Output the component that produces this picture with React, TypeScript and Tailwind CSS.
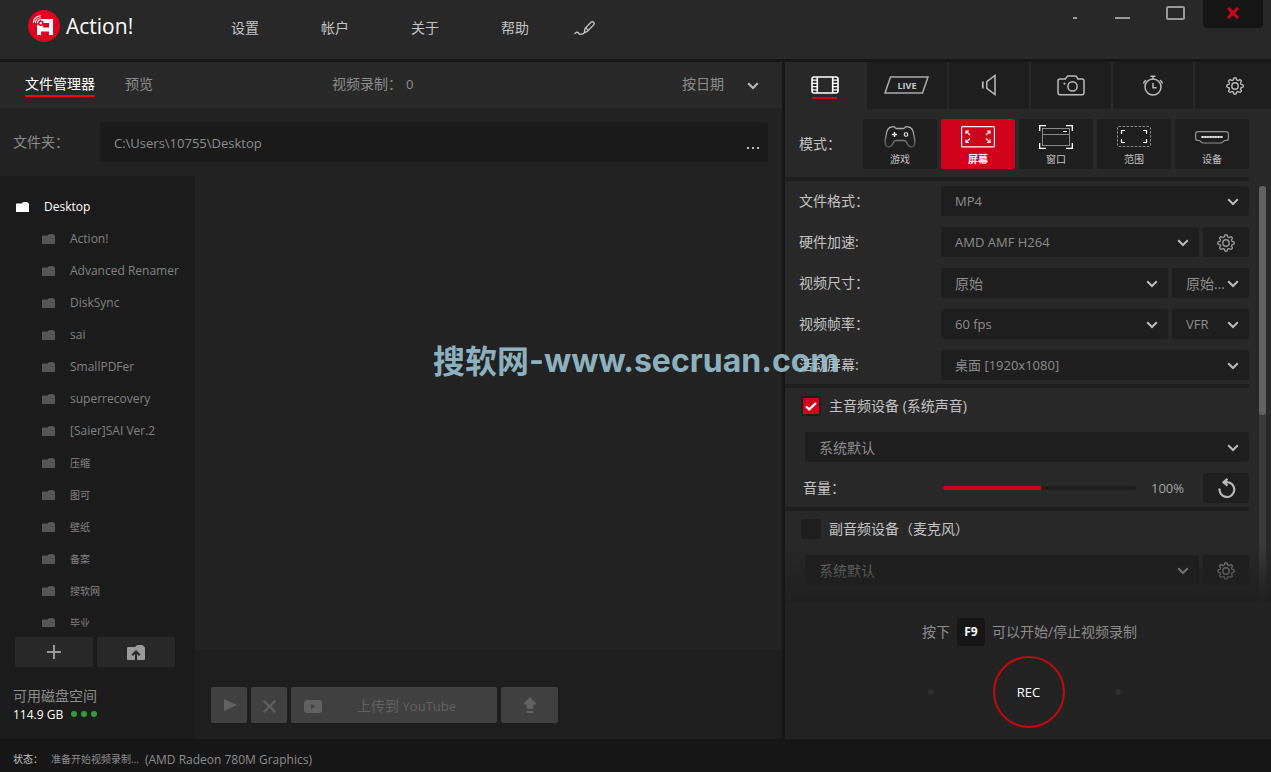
import React from 'react';
import clsx from 'clsx';

const folders = [
  'Action!',
  'Advanced Renamer',
  'DiskSync',
  'sai',
  'SmallPDFer',
  'superrecovery',
  '[Saier]SAI Ver.2',
  '压缩',
  '图可',
  '壁纸',
  '备案',
  '搜软网',
  '毕业',
];

const isLatin = (text: string) => /^[\x20-\x7e]+$/.test(text);

// Outline of an eight-tooth gear centred on 10,10
const gearPath = (() => {
  const points: string[] = [];
  for (let i = 0; i < 128; i++) {
    const angle = (i / 128) * Math.PI * 2;
    const r = 7.2 + Math.tanh(2.2 * Math.cos(angle * 8));
    points.push(`${(10 + r * Math.sin(angle)).toFixed(2)} ${(10 - r * Math.cos(angle)).toFixed(2)}`);
  }
  return `M${points.join('L')}Z`;
})();

const GearIcon: React.FC = () => (
  <svg width="20" height="20" viewBox="0 0 20 20" fill="none" stroke="currentColor" strokeWidth="1.4">
    <path d={gearPath} />
    <circle cx="10" cy="10" r="3.2" />
  </svg>
);

const FolderIcon: React.FC = () => (
  <svg width="13" height="10" viewBox="0 0 13 10" fill="currentColor" className="shrink-0">
    <path d="M0 2.2Q0 1.5.7 1.5H5.6L7 .3Q7.4 0 8 0H11L13 1.8V9.4Q13 10 12.4 10H.6Q0 10 0 9.4Z" />
  </svg>
);

const ChevronIcon: React.FC<{ className?: string }> = ({ className }) => (
  <svg width="12" height="8" viewBox="0 0 12 8" fill="none" stroke="currentColor" strokeWidth="2" className={className}>
    <path d="M1.2 1.3L6 6L10.8 1.3" />
  </svg>
);

const Logo: React.FC = () => (
  <svg width="32" height="32" viewBox="0 0 32 32" fill="none">
    <circle cx="16" cy="16" r="16" fill="#dc0420" />
    <path d="M13 9H25V25H21V21.5H13V25H9V15H13Z" fill="#fff" />
    <rect x="15" y="13" width="6" height="4.5" fill="#dc0420" />
    <circle cx="12.8" cy="13.2" r="2.8" fill="#dc0420" />
    <circle cx="12.8" cy="13.2" r="1.2" fill="#fff" />
    <path d="M9.3 13.2A3.6 3.6 0 0 1 12.8 9.8M7.4 13A5.5 5.5 0 0 1 12.8 7.8M5.4 12.8A7.4 7.4 0 0 1 12.8 5.7" stroke="#fff" strokeWidth="1.1" />
  </svg>
);

const Header: React.FC = () => (
  <header className="flex h-[62px] shrink-0 items-start border-b-3 border-[#161616] bg-[#282828]">
    <div className="flex items-center gap-1.5 pt-2.5 pl-7">
      <Logo />
      <span className="w-[69px] text-[21px] leading-8 text-white">Action!</span>
    </div>
    <nav className="flex items-start gap-[62px] pt-[18px] pl-24 text-sm leading-5 text-[#c4c4c4]">
      <a href="#settings">设置</a>
      <a href="#account">帐户</a>
      <a href="#about">关于</a>
      <a href="#help">帮助</a>
      <button aria-label="画笔" className="-ml-[17px] pt-[3px]">
        <svg width="21" height="15" viewBox="0 0 21 15" fill="none" stroke="currentColor" strokeWidth="1.3" strokeLinecap="round" strokeLinejoin="round">
          <path d="M.8 12.6Q3 10.2 4.3 12T7 13.2Q9.4 13.2 10.4 11.6" />
          <path d="M10.4 11.6L10.8 7.8L17 1.3Q18.4.2 19.6 1.3T19.7 3.9L13.4 10.3Z" />
          <path d="M11.6 6.9L14.1 9.4" />
        </svg>
      </button>
    </nav>
    <div className="ml-auto flex h-7 pr-2 text-[#999]">
      <button aria-label="迷你模式" className="flex w-5 justify-center pt-[17px]">
        <span className="h-0.5 w-1 bg-current" />
      </button>
      <button aria-label="最小化" className="ml-[23px] flex w-7 justify-center pt-[17px]">
        <span className="h-0.5 w-[15px] bg-current" />
      </button>
      <button aria-label="最大化" className="ml-[23px] flex w-8 justify-center pt-1.5">
        <span className="h-3.5 w-[19px] rounded-xs border-2 border-current" />
      </button>
      <button aria-label="关闭" className="ml-3 flex w-[60px] items-center justify-center rounded-b bg-[#151515] pb-0.5 text-[#d0021b]">
        <svg width="12" height="12" viewBox="0 0 12 12" stroke="currentColor" strokeWidth="3">
          <path d="M1 1L11 11M11 1L1 11" />
        </svg>
      </button>
    </div>
  </header>
);

const Sidebar: React.FC = () => (
  <aside className="flex w-[195px] shrink-0 flex-col bg-[#1b1b1b]">
    <ul className="min-h-0 flex-1 overflow-hidden pt-[15px] text-xs text-[#828282]">
      <li className="flex h-8 items-center gap-[15px] pl-4 text-white">
        <FolderIcon />
        Desktop
      </li>
      {folders.map((name) => (
        <li key={name} className="flex h-8 items-center gap-[15px] pl-[42px]">
          <span className="text-[#555]">
            <FolderIcon />
          </span>
          <span className={isLatin(name) ? 'text-xs' : 'pt-0.5 text-[10px]'}>{name}</span>
        </li>
      ))}
    </ul>
    <div className="mt-2.5 flex gap-1 pl-[15px] text-[#999]">
      <button aria-label="添加" className="flex h-[30px] w-[78px] items-center justify-center rounded-xs bg-[#282828]">
        <svg width="14" height="14" viewBox="0 0 14 14" stroke="currentColor" strokeWidth="2">
          <path d="M7 0V14M0 7H14" />
        </svg>
      </button>
      <button aria-label="打开文件夹" className="flex h-[30px] w-[78px] items-center justify-center rounded-xs bg-[#282828]">
        <svg width="18" height="15" viewBox="0 0 18 15">
          <path d="M0 3Q0 2 1 2H8L9.6.5Q10 0 11 0H15.5L18 2.5V14Q18 15 17 15H1Q0 15 0 14Z" fill="currentColor" />
          <path d="M9 15V7M5.2 10.3L9 6.5L12.8 10.3" fill="none" stroke="#282828" strokeWidth="2" />
        </svg>
      </button>
    </div>
    <div className="mt-5 pb-3.5 pl-[13px]">
      <div className="text-sm leading-[18px] text-[#8c8c8c]">可用磁盘空间</div>
      <div className="flex items-center text-xs leading-5 text-white">
        114.9 GB
        <span className="ml-2 flex gap-1 pb-0.5">
          <span className="size-1.5 rounded-full bg-[#339a3a]" />
          <span className="size-1.5 rounded-full bg-[#339a3a]" />
          <span className="size-1.5 rounded-full bg-[#339a3a]" />
        </span>
      </div>
    </div>
  </aside>
);

const Actions: React.FC = () => (
  <div className="flex h-[89px] shrink-0 items-center gap-1 bg-[#1e1e1e] px-4 pt-[21px] text-[#616161]">
    <button aria-label="播放" className="flex size-9 items-center justify-center rounded-xs bg-[#404040] pl-0.5">
      <svg width="13" height="12" viewBox="0 0 13 12" fill="currentColor">
        <path d="M0 0L13 6L0 12Z" />
      </svg>
    </button>
    <button aria-label="删除" className="flex size-9 items-center justify-center rounded-xs bg-[#404040] pt-0.5">
      <svg width="13" height="13" viewBox="0 0 13 13" stroke="currentColor" strokeWidth="2">
        <path d="M.7 .7L12.3 12.3M12.3 .7L.7 12.3" />
      </svg>
    </button>
    <button className="flex h-9 w-[206px] items-center rounded-xs bg-[#404040] pt-0.5 pl-[13px]">
      <svg width="18" height="13" viewBox="0 0 18 13">
        <rect width="18" height="13" rx="3" fill="currentColor" />
        <path d="M7 4L11.5 6.5L7 9Z" fill="#404040" />
      </svg>
      <span className="flex-1 pr-1.5 text-center text-sm">
        上传到 <span className="text-[13px]">YouTube</span>
      </span>
    </button>
    <button aria-label="上传" className="flex h-9 w-[57px] items-center justify-center rounded-xs bg-[#404040]">
      <svg width="14" height="16" viewBox="0 0 14 16" fill="currentColor">
        <path d="M7 0L14 7.4H10.3V12H3.7V7.4H0Z" />
        <rect x="3.7" y="14" width="6.6" height="2" />
      </svg>
    </button>
  </div>
);

const FileManager: React.FC = () => (
  <section className="flex min-w-0 flex-1 flex-col bg-[#222]">
    <div className="flex h-[46px] shrink-0 items-center bg-[#282828] text-sm leading-[22px] text-[#8c8c8c]">
      <button className="ml-[25px] h-6 border-b-2 border-[#f00] text-white">文件管理器</button>
      <button className="ml-[30px] h-6 border-b-2 border-transparent">预览</button>
      <span className="ml-[179px] h-6">
        视频录制：<span className="ml-1 text-[13px]">0</span>
      </span>
      <div className="relative ml-auto h-6">
        <select aria-label="排序" className="block w-20 appearance-none bg-transparent leading-[22px]">
          <option>按日期</option>
        </select>
        <ChevronIcon className="pointer-events-none absolute top-[9px] right-[3px] text-[#bbb]" />
      </div>
      <span className="w-5" />
    </div>
    <div className="flex h-[68px] shrink-0 items-center pr-3.5 pl-[13px] text-[#8c8c8c]">
      <label htmlFor="folder" className="w-[87px] text-sm">文件夹：</label>
      <div className="flex h-10 flex-1 items-center rounded-xs bg-[#1a1a1a]">
        <input id="folder" defaultValue="C:\Users\10755\Desktop" className="h-full min-w-0 flex-1 bg-transparent pt-0.5 pl-3.5 text-[13px] outline-none" />
        <button aria-label="浏览" className="flex gap-[3px] pt-3 pr-[9px]">
          <span className="size-0.5 bg-[#bbb]" />
          <span className="size-0.5 bg-[#bbb]" />
          <span className="size-0.5 bg-[#bbb]" />
        </button>
      </div>
    </div>
    <div className="flex min-h-0 flex-1">
      <Sidebar />
      <div className="flex min-w-0 flex-1 flex-col">
        <div className="flex-1" />
        <Actions />
      </div>
    </div>
  </section>
);

const FilmIcon: React.FC = () => (
  <svg width="28" height="18" viewBox="0 0 28 18" fill="none" stroke="#fff">
    <rect x="1" y="1" width="26" height="16" rx="2" strokeWidth="1.6" />
    <path d="M6.3 1V17M21.7 1V17" strokeWidth="1.6" />
    <path d="M1 4.2H6M1 7.4H6M1 10.6H6M1 13.8H6M22 4.2H27M22 7.4H27M22 10.6H27M22 13.8H27" strokeWidth="1.3" />
  </svg>
);

const LiveIcon: React.FC = () => (
  <svg width="45" height="18" viewBox="0 0 45 18" fill="none">
    <path d="M6.5 1H44L38.5 17H1Z" stroke="#aaa" strokeWidth="1.5" />
    <text x="23" y="12.6" textAnchor="middle" fill="#c8c8c8" className="text-[9px] font-bold">LIVE</text>
  </svg>
);

const SpeakerIcon: React.FC = () => (
  <svg width="16" height="22" viewBox="0 0 16 22" fill="none" stroke="#bbb" strokeWidth="1.5">
    <path d="M14 1.5V20.5L5.8 14.4V7.6Z" />
    <path d="M1.8 7.5V14.5" strokeWidth="1.7" />
  </svg>
);

const CameraIcon: React.FC = () => (
  <svg width="28" height="21" viewBox="0 0 28 21" fill="none" stroke="#bbb" strokeWidth="1.5">
    <path d="M3 4H8.3L10 1.6Q10.4 1 11 1H18.5Q19.1 1 19.5 1.6L21 4H25Q27 4 27 6V17.5Q27 19.8 25 19.8H3Q1 19.8 1 17.5V6Q1 4 3 4Z" />
    <circle cx="15.5" cy="11.4" r="4.6" />
    <circle cx="7.5" cy="8.7" r=".8" fill="#bbb" strokeWidth=".6" />
  </svg>
);

const TimerIcon: React.FC = () => (
  <svg width="22" height="21" viewBox="0 0 22 21" fill="none" stroke="#bbb" strokeWidth="1.5">
    <circle cx="11" cy="12" r="8" />
    <path d="M8.5 1.2H13.5M11 1.2V4M11 8V12.8H14.6" />
    <path d="M1.5 8.6Q2.2 6.4 4 5M20.5 8.6Q19.8 6.4 18 5" />
  </svg>
);

const tabs = [
  { name: '直播', icon: <LiveIcon /> },
  { name: '音频', icon: <SpeakerIcon /> },
  { name: '截图', icon: <CameraIcon /> },
  { name: '定时', icon: <TimerIcon /> },
];

const GameIcon: React.FC = () => (
  <svg width="34" height="24" viewBox="0 0 34 24" fill="none">
    <defs>
      <linearGradient id="pad" x1="0" y1="0" x2="0" y2="1">
        <stop offset="0" stopColor="#b5b5b5" />
        <stop offset="1" stopColor="#5a5a5a" />
      </linearGradient>
    </defs>
    <path d="M8.5 2Q11 1 12.4 2.8Q13 3.5 14 3.5H20Q21 3.5 21.6 2.8Q23 1 25.5 2Q29.8 2.6 30.6 9Q32.6 17 31.3 20Q30 22.6 27.3 21.7Q25 21 23.3 17Q22.6 15.5 21 15.5H13Q11.4 15.5 10.7 17Q9 21 6.7 21.7Q4 22.6 2.7 20Q1.4 17 3.4 9Q4.2 2.6 8.5 2Z" stroke="url(#pad)" strokeWidth="1.3" />
    <path d="M11.5 7V12M9 9.5H14" stroke="#fff" strokeWidth="1.4" />
    <circle cx="23" cy="9.5" r="1.8" stroke="#eee" strokeWidth="1.1" />
  </svg>
);

const ScreenIcon: React.FC = () => (
  <svg width="34" height="24" viewBox="0 0 34 24" fill="none" stroke="#fff" strokeWidth="1.1">
    <rect x=".6" y="1.6" width="32.8" height="20.3" rx="1" />
    <path d="M5 9V6H8M5 6L9 10M26 6H29V9M29 6L25 10M5 14.5V17.5H8M5 17.5L9 13.5M26 17.5H29V14.5M29 17.5L25 13.5" />
  </svg>
);

const WindowIcon: React.FC = () => (
  <svg width="34" height="24" viewBox="0 0 34 24" fill="none">
    <path d="M.7 6V.7H7M27 .7H33.3V6M.7 18V23.3H7M27 23.3H33.3V18" stroke="#fff" strokeWidth="1.3" />
    <rect x="3.5" y="3.5" width="27" height="17" stroke="#8a8a8a" />
    <path d="M3.5 9.5H30.5" stroke="#8a8a8a" />
    <path d="M24 6.5H28" stroke="#fff" />
  </svg>
);

const RegionIcon: React.FC = () => (
  <svg width="34" height="24" viewBox="0 0 34 24" fill="none">
    <rect x=".5" y="1.5" width="33" height="20" rx="1" stroke="#8a8a8a" strokeDasharray="2.5 1.5" />
    <path d="M4.5 9V5.5H8M26 5.5H29.5V9M4.5 14V17.5H8M26 17.5H29.5V14" stroke="#fff" strokeWidth="1.2" />
  </svg>
);

const DeviceIcon: React.FC = () => (
  <svg width="34" height="24" viewBox="0 0 34 24" fill="none">
    <path d="M3 6.6H31Q33.4 6.6 33.4 9V13.5Q33.4 15.5 31 15.5H29.5L26.5 18H7.5L4.5 15.5H3Q.6 15.5 .6 13.5V9Q.6 6.6 3 6.6Z" stroke="#909090" strokeWidth="1.2" />
    <path d="M6 12H28" stroke="#999" strokeWidth="2" />
    <path d="M7 12H27" stroke="#fff" strokeWidth="1.6" strokeDasharray="1 .6" />
  </svg>
);

const modes = [
  { name: '游戏', icon: <GameIcon /> },
  { name: '屏幕', icon: <ScreenIcon />, active: true },
  { name: '窗口', icon: <WindowIcon /> },
  { name: '范围', icon: <RegionIcon /> },
  { name: '设备', icon: <DeviceIcon /> },
];

interface DropDownProps {
  label: string;
  value: string;
  className?: string;
}

const DropDown: React.FC<DropDownProps> = ({ label, value, className }) => (
  <div className={clsx('relative h-[30px] rounded-xs bg-[#1e1e1e] text-[#8c8c8c]', className)}>
    <select
      aria-label={label}
      className={clsx('h-full w-full appearance-none bg-transparent pt-0.5 pl-3.5', /^[\u4e00-\u9fff.]+$/.test(value) ? 'text-sm' : 'text-[13px]')}
    >
      <option>{value}</option>
    </select>
    <ChevronIcon className="pointer-events-none absolute top-3 right-2.5 text-[#bbb]" />
  </div>
);

const GearButton: React.FC = () => (
  <button aria-label="配置" className="flex h-[30px] w-[46px] items-center justify-center rounded-xs bg-[#1e1e1e] pt-0.5 text-[#999]">
    <GearIcon />
  </button>
);

const Row: React.FC<{ label: string; children: React.ReactNode }> = ({ label, children }) => (
  <div className="flex items-center">
    <span className="w-[142px] shrink-0 text-sm">{label}</span>
    <div className="flex flex-1 gap-1">{children}</div>
  </div>
);

const CheckBox: React.FC<{ label: string; defaultChecked?: boolean }> = ({ label, defaultChecked }) => (
  <label className="ml-0.5 flex h-5 items-center gap-2 text-sm">
    <span className="relative size-5">
      <input type="checkbox" defaultChecked={defaultChecked} className="peer block size-5 appearance-none rounded-xs border-2 border-[#1e1e1e] bg-[#1e1e1e] checked:bg-[#d0021b]" />
      <svg width="12" height="9" viewBox="0 0 12 9" fill="none" stroke="#fff" strokeWidth="2.2" className="pointer-events-none absolute top-1.5 left-1 hidden peer-checked:block">
        <path d="M1 4.5L4.2 7.4L11 1" />
      </svg>
    </span>
    {label}
  </label>
);

const VolumeRow: React.FC = () => {
  const [level, setLevel] = React.useState(101);
  const fill = `${level / 2}%`;

  return (
    <div className="mt-[11px] flex items-center">
      <label htmlFor="volume" className="w-[140px] shrink-0 pl-1 text-sm">音量：</label>
      <input
        id="volume"
        type="range"
        min={0}
        max={200}
        value={level}
        onChange={(e) => setLevel(Number(e.target.value))}
        className="ml-1 h-1 min-w-0 flex-1 appearance-none rounded-xs [&::-webkit-slider-thumb]:size-0 [&::-webkit-slider-thumb]:appearance-none"
        style={{ background: `linear-gradient(to right, #d0021b ${fill}, #1e1e1e ${fill})` }}
      />
      <span className="w-[66px] pt-0.5 pl-3.5 text-[13px] text-[#a5a5a5]">100%</span>
      <button aria-label="重置音量" className="flex h-[30px] w-[46px] items-center justify-center rounded-xs bg-[#1e1e1e] pl-0.5 text-[#bbb]">
        <svg width="18" height="20" viewBox="0 0 18 20" fill="none" stroke="currentColor" strokeWidth="2.2">
          <path d="M1.6 10.5A7.4 7.4 0 1 0 9 4.2H5.5" />
          <path d="M9.5 .8L5.5 4.2L9.5 7.6" />
        </svg>
      </button>
    </div>
  );
};

const Settings: React.FC = () => (
  <div className="relative flex min-h-0 flex-1 overflow-hidden">
    <div className="flex-1 text-[#c4c4c4]">
      <div className="flex flex-col gap-[11px] pt-[5px] pb-1 pl-3.5">
        <Row label="文件格式：">
          <DropDown label="文件格式" value="MP4" className="flex-1" />
        </Row>
        <Row label="硬件加速:">
          <DropDown label="硬件加速" value="AMD AMF H264" className="flex-1" />
          <GearButton />
        </Row>
        <Row label="视频尺寸：">
          <DropDown label="视频尺寸" value="原始" className="flex-1" />
          <DropDown label="纵横比" value="原始..." className="w-[77px]" />
        </Row>
        <Row label="视频帧率：">
          <DropDown label="视频帧率" value="60 fps" className="flex-1" />
          <DropDown label="帧率模式" value="VFR" className="w-[77px]" />
        </Row>
        <Row label="活动屏幕:">
          <DropDown label="活动屏幕" value="桌面 [1920x1080]" className="flex-1" />
        </Row>
      </div>
      <div className="border-t-4 border-[#1e1e1e] pt-2 pb-1 pl-3.5">
        <CheckBox label="主音频设备 (系统声音)" defaultChecked />
        <DropDown label="主音频设备" value="系统默认" className="mt-4 ml-1.5" />
        <VolumeRow />
      </div>
      <div className="border-t-4 border-[#1e1e1e] pt-2 pl-3.5">
        <CheckBox label="副音频设备（麦克风）" />
        <div className="mt-4 ml-1.5 flex gap-1">
          <DropDown label="副音频设备" value="系统默认" className="flex-1" />
          <GearButton />
        </div>
      </div>
    </div>
    <div className="mt-[5px] mr-[5px] ml-2.5 w-[7px] bg-[#3a3a3a]">
      <div className="h-[229px] rounded bg-[#626262]" />
    </div>
    <div className="pointer-events-none absolute inset-x-0 bottom-0 h-[58px] bg-linear-to-b from-transparent to-[#1f1f1f]" />
  </div>
);

const RecordPanel: React.FC = () => (
  <div className="h-[138px] shrink-0 bg-[#222] pt-[17px]">
    <div className="flex items-center justify-center gap-[7px] pl-[3px] text-sm text-[#8c8c8c]">
      按下
      <kbd className="flex size-7 items-center justify-center rounded-xs bg-[#161616] font-[inherit] text-xs font-bold text-white">F9</kbd>
      可以开始/停止视频录制
    </div>
    <div className="mt-2.5 flex items-center justify-center pr-2">
      <span className="mr-[59px] size-1.5 rounded-full bg-[#2f2f2f]" />
      <button className="size-[72px] rounded-full border-2 border-[#c00a0e] pt-0.5 text-[13px] text-white">REC</button>
      <span className="ml-[50px] size-1.5 rounded-full bg-[#2f2f2f]" />
    </div>
  </div>
);

const RecorderPanel: React.FC = () => (
  <section className="flex w-[486px] shrink-0 flex-col bg-[#282828]">
    <div className="flex h-[47px] shrink-0 gap-0.5">
      <button aria-label="视频" className="-mr-0.5 flex w-[82px] flex-col items-center pt-3.5 pr-[3px]">
        <FilmIcon />
        <span className="mt-[3px] h-0.5 w-[25px] bg-[#d0021b]" />
      </button>
      {tabs.map((tab) => (
        <button key={tab.name} aria-label={tab.name} className="flex w-20 items-center justify-center bg-[#1e1e1e] pr-px pb-px">
          {tab.icon}
        </button>
      ))}
      <button aria-label="选项" className="flex flex-1 items-center justify-center bg-[#1e1e1e] pl-1 text-[#bbb]">
        <GearIcon />
      </button>
    </div>
    <div className="flex items-center gap-1 pt-2.5 pr-[22px] pb-2 pl-3.5">
      <span className="w-[60px] text-sm text-[#c4c4c4]">模式：</span>
      {modes.map((mode) => (
        <button
          key={mode.name}
          className={clsx(
            'flex h-[50px] flex-1 flex-col items-center rounded-xs pt-1.5 text-[10px] leading-5',
            mode.active ? 'bg-[#d0021b] font-bold text-white' : 'bg-[#1e1e1e] text-[#c4c4c4]'
          )}
        >
          {mode.icon}
          {mode.name}
        </button>
      ))}
    </div>
    <div className="mr-[22px] h-1 shrink-0 bg-[#1e1e1e]" />
    <Settings />
    <RecordPanel />
  </section>
);

const App: React.FC = () => (
  <div className="relative flex h-screen flex-col overflow-hidden bg-[#161616] font-['Open_Sans','Noto_Sans_CJK_SC',sans-serif]">
    <Header />
    <main className="flex min-h-0 flex-1 gap-[3px]">
      <FileManager />
      <RecorderPanel />
    </main>
    <footer className="flex h-[33px] shrink-0 items-center pt-2 pl-[13px] text-[10px]">
      <span className="w-[38px] text-[#c4c4c4]">状态：</span>
      <span className="text-[#8c8c8c]">准备开始视频录制...</span>
      <span className="ml-1.5 text-xs text-[#8c8c8c]">(AMD Radeon 780M Graphics)</span>
    </footer>
    <div className="pointer-events-none absolute top-[341px] left-[433px] flex items-center text-[32px] leading-10 font-bold whitespace-nowrap text-[#9cc5d4]/90">
      搜软网<span className="font-['Inter',sans-serif]">-www.secruan.com</span>
    </div>
  </div>
);

export default App;
